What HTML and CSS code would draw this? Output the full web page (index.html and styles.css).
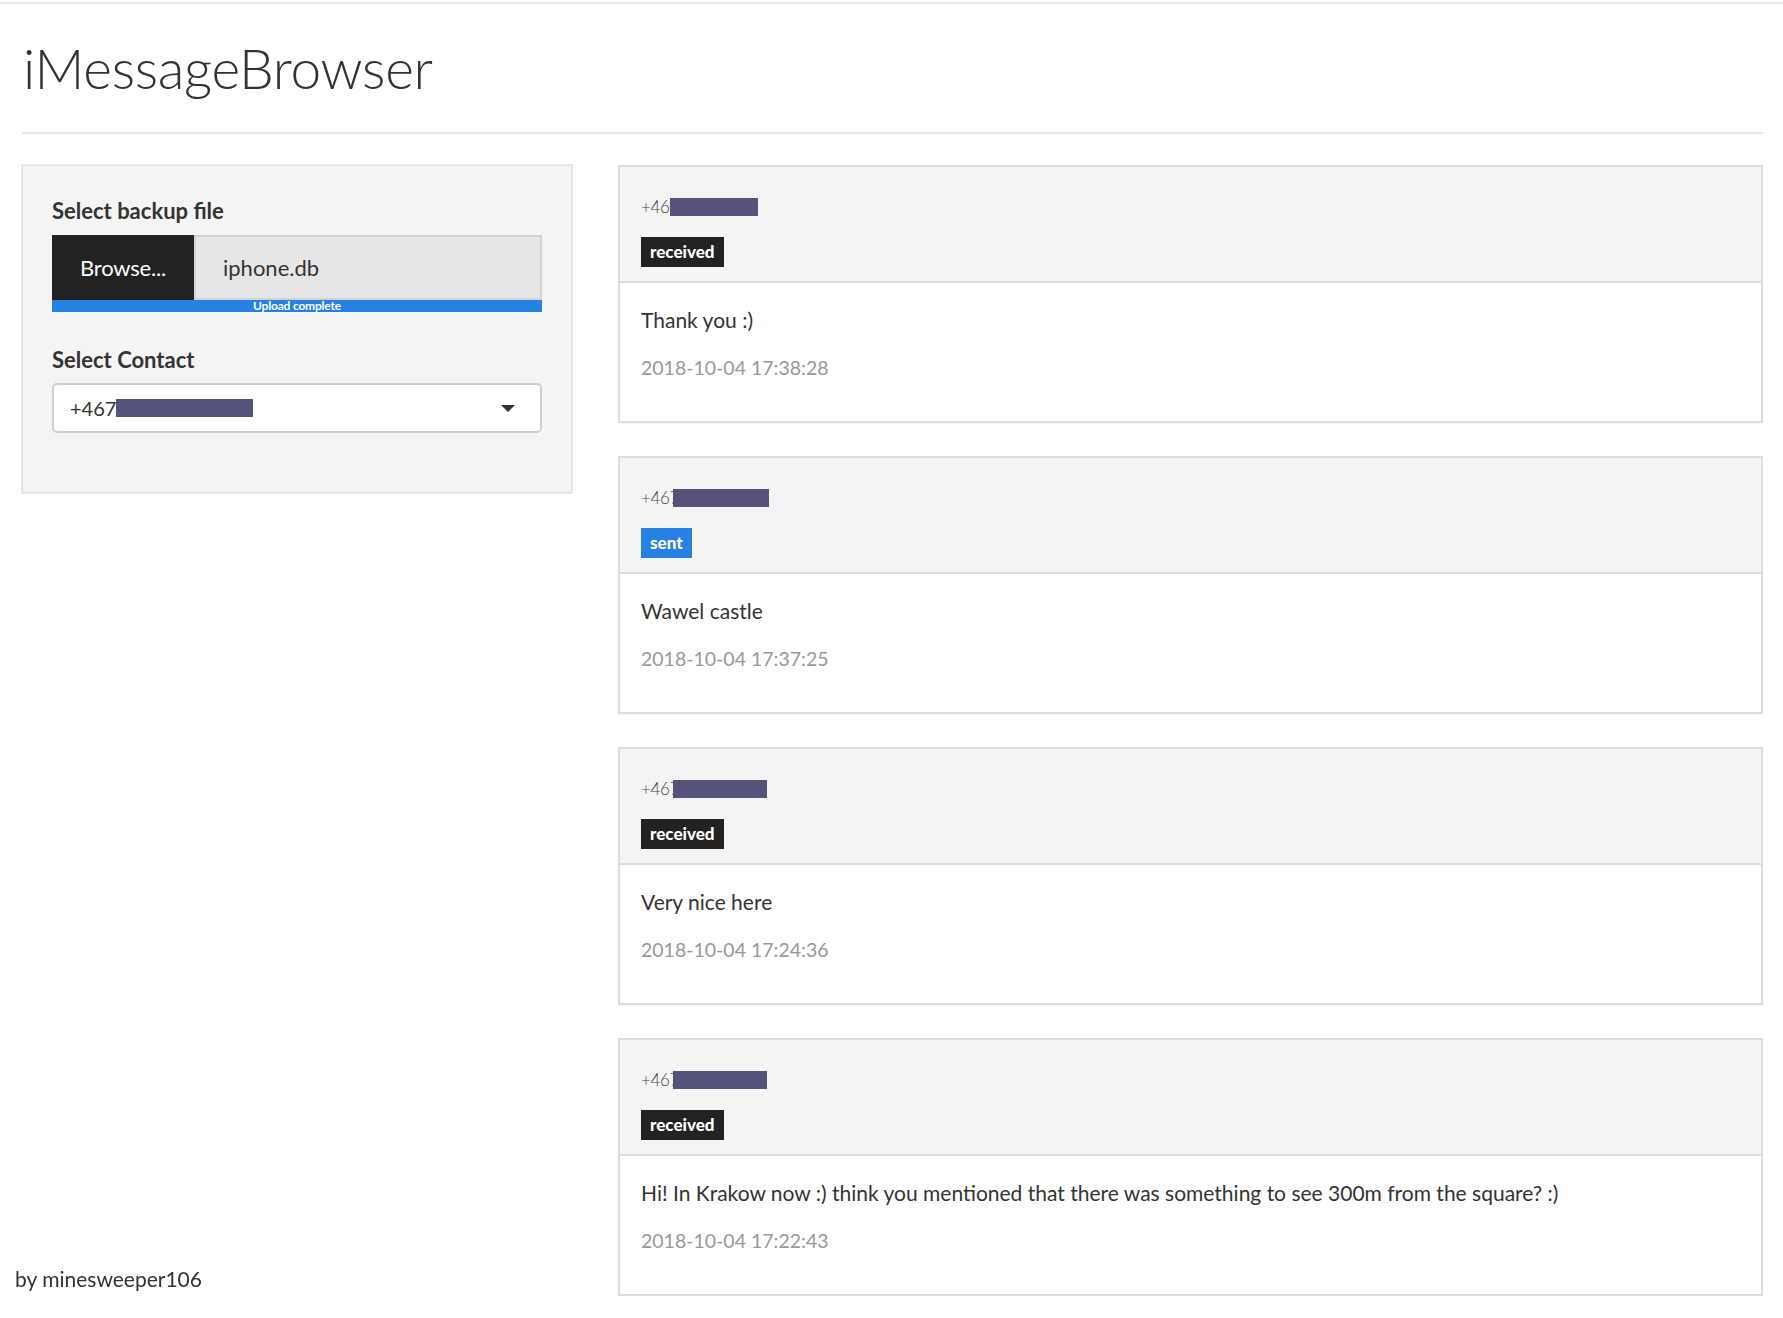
FILE: index.html
```html
<!DOCTYPE html>
<html lang="en">
<head>
<meta charset="utf-8">
<title>iMessageBrowser</title>
<link rel="stylesheet" href="styles.css">
</head>
<body>
<div class="page">
  <h2 class="title">iMessageBrowser</h2>
  <hr class="rule">
  <div class="layout">
    <aside class="sidebar">
      <div class="well">
        <div class="form-group file-group">
          <label class="control-label">Select backup file</label>
          <div class="file-row">
            <span class="btn-browse">Browse...</span>
            <span class="file-name">iphone.db</span>
          </div>
          <div class="progress"><span>Upload complete</span></div>
        </div>
        <div class="form-group">
          <label class="control-label">Select Contact</label>
          <div class="select">
            <span class="select-value">+467<span class="redact redact-select"></span></span>
            <span class="caret"></span>
          </div>
        </div>
      </div>
    </aside>
    <main class="messages">
      <section class="panel">
        <div class="panel-heading">
          <div class="phone">+46<span class="redact" style="width:88px"></span></div>
          <span class="label label-received">received</span>
        </div>
        <div class="panel-body">
          <p class="msg">Thank you :)</p>
          <p class="time">2018-10-04 17:38:28</p>
        </div>
      </section>
      <section class="panel">
        <div class="panel-heading">
          <div class="phone">+467<span class="redact redact-over" style="width:96px"></span></div>
          <span class="label label-sent">sent</span>
        </div>
        <div class="panel-body">
          <p class="msg">Wawel castle</p>
          <p class="time">2018-10-04 17:37:25</p>
        </div>
      </section>
      <section class="panel">
        <div class="panel-heading">
          <div class="phone">+467<span class="redact redact-over" style="width:94px"></span></div>
          <span class="label label-received">received</span>
        </div>
        <div class="panel-body">
          <p class="msg">Very nice here</p>
          <p class="time">2018-10-04 17:24:36</p>
        </div>
      </section>
      <section class="panel">
        <div class="panel-heading">
          <div class="phone">+467<span class="redact redact-over" style="width:94px"></span></div>
          <span class="label label-received">received</span>
        </div>
        <div class="panel-body">
          <p class="msg">Hi! In Krakow now :) think you mentioned that there was something to see 300m from the square? :)</p>
          <p class="time">2018-10-04 17:22:43</p>
        </div>
      </section>
    </main>
  </div>
</div>
<footer class="footer">by minesweeper106</footer>
</body>
</html>
```

FILE: styles.css
```css
html, body {
  margin: 0;
  padding: 0;
  background: #ffffff;
}

body {
  padding-top: 2px;
  font-family: Lato, "Noto Sans", "Liberation Sans", sans-serif;
  color: #333333;
}

.page {
  border-top: 2px solid #eaeaea;
  padding: 0 20px 0 22px;
}

.title {
  margin: 33px 0 0 1px;
  font-size: 55px;
  line-height: 63px;
  font-weight: 300;
  color: #333333;
  letter-spacing: -0.3px;
}

.rule {
  margin: 32px 0 0 0;
  border: 0;
  border-top: 2px solid #e6e6e6;
  height: 0;
}

.layout {
  display: grid;
  grid-template-columns: 550px 1fr;
  column-gap: 46px;
  margin-top: 31px;
  align-items: start;
}

/* sidebar */
.well {
  background: #f4f4f4;
  border: 1px solid #e0e0e0;
  box-shadow: 0 0 0 1px #ececec;
  padding: 30px 29px 59px 29px;
}

.form-group {
  display: flex;
  flex-direction: column;
}

.file-group {
  margin-bottom: 33px;
}

.control-label {
  font-size: 22px;
  line-height: 29px;
  font-weight: 700;
  color: #333333;
  margin-bottom: 10px;
}

.form-group + .form-group .control-label {
  margin-bottom: 9px;
}

.file-row {
  display: flex;
  height: 65px;
}

.btn-browse {
  width: 142px;
  flex: none;
  background: #222222;
  color: #ffffff;
  font-size: 22px;
  display: flex;
  align-items: center;
  justify-content: center;
  letter-spacing: -0.2px;
}

.file-name {
  flex: 1;
  background: #e6e6e6;
  border: 2px solid #d2d2d2;
  display: flex;
  align-items: center;
  padding-left: 27px;
  font-size: 22px;
  color: #333333;
}

.progress {
  height: 12px;
  background: #2780e3;
  color: #ffffff;
  font-size: 12px;
  line-height: 12px;
  font-weight: 700;
  text-align: center;
  letter-spacing: -0.2px;
}

.select {
  height: 50px;
  box-sizing: border-box;
  border: 2px solid #cfcfcf;
  border-radius: 5px;
  background: #ffffff;
  display: flex;
  align-items: center;
  justify-content: space-between;
  padding: 0 25px 0 16px;
}

.select-value {
  font-size: 20px;
  color: #333333;
  display: flex;
  align-items: center;
}

.redact {
  display: inline-block;
  height: 18px;
  background: #55527c;
  vertical-align: middle;
}

.redact-select {
  width: 137px;
}

.caret {
  width: 0;
  height: 0;
  border-left: 7px solid transparent;
  border-right: 7px solid transparent;
  border-top: 7px solid #333333;
}

/* messages */
.messages {
  display: flex;
  flex-direction: column;
  gap: 33px;
}

.panel {
  border: 2px solid #dcdcdc;
  background: #ffffff;
  box-shadow: 0 1px 2px rgba(0, 0, 0, 0.04);
}

.panel-heading {
  background: #f4f4f4;
  border-bottom: 2px solid #dcdcdc;
  padding: 28px 21px 14px 21px;
}

.phone {
  font-size: 17px;
  line-height: 24px;
  font-weight: 300;
  color: #444444;
  display: flex;
  align-items: center;
  margin-bottom: 18px;
  letter-spacing: -0.3px;
}

.phone .redact {
  height: 18px;
}

.phone .redact-over {
  margin-left: -6px;
}

.label {
  display: inline-block;
  height: 30px;
  line-height: 30px;
  padding: 0 9px;
  font-size: 17px;
  font-weight: 900;
  color: #ffffff;
  vertical-align: top;
}

.label-received {
  background: #222222;
}

.label-sent {
  background: #2780e3;
}

.panel-body {
  padding: 22px 21px 38px 21px;
}

.msg {
  margin: 0 0 18px 0;
  font-size: 21px;
  line-height: 30px;
  color: #333333;
}

.time {
  margin: 0;
  font-size: 19.5px;
  line-height: 30px;
  color: #999999;
}

.footer {
  position: fixed;
  left: 15px;
  bottom: 25px;
  font-size: 21px;
  line-height: 28px;
  color: #333333;
}
```
